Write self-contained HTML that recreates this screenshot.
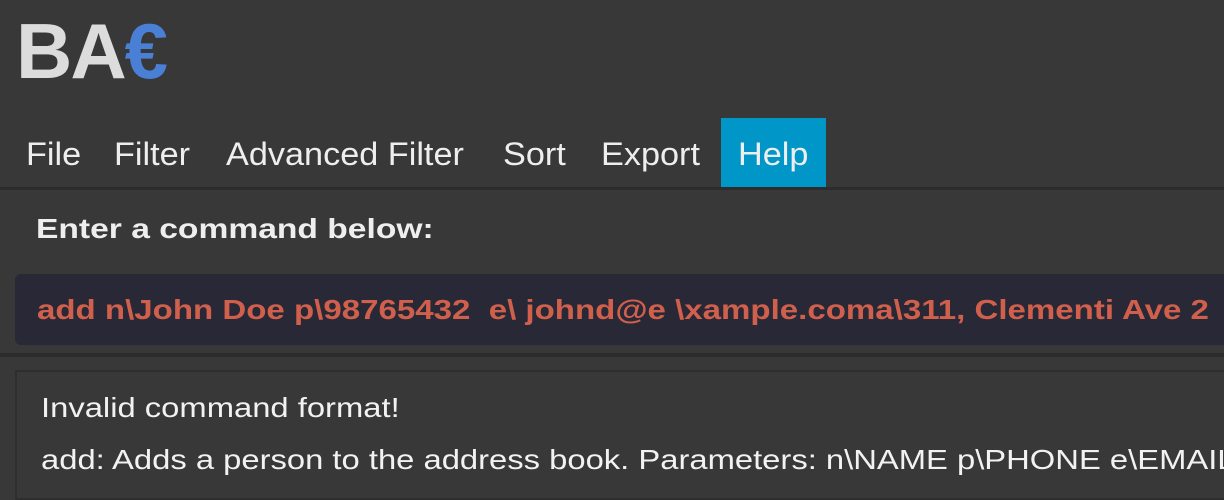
<!DOCTYPE html>
<html><head><meta charset="utf-8"><style>
html,body{margin:0;padding:0;width:1224px;height:482px;overflow:hidden;background:#383838;font-family:"Liberation Sans",sans-serif;}
.logo{position:absolute;left:16px;top:6px;font-size:78px;font-weight:bold;color:#dcdcdc;letter-spacing:-2px;line-height:90px;}
.logo span{color:#4a7fd6;}
.menu{position:absolute;top:118px;left:0;height:69px;}
.mi{position:absolute;top:0;height:69px;line-height:72px;font-size:32px;color:#eee;white-space:nowrap;}
.mi span{display:inline-block;transform:scaleX(1.07);transform-origin:left;}
.help{background:#0096c8;left:721px;width:105px;}
.div1{position:absolute;top:187px;left:0;width:1224px;height:3px;background:#2c2c2c;}
.enter{position:absolute;left:36px;top:213px;font-size:28px;font-weight:bold;color:#eee;transform:scaleX(1.2);transform-origin:left;white-space:nowrap;}
.cmd{position:absolute;left:15px;top:274px;width:1230px;height:71px;background:#282836;border-radius:6px;}
.cmd div{position:absolute;left:22px;top:20px;font-size:28px;font-weight:bold;color:#d0604c;white-space:nowrap;transform:scaleX(1.18);transform-origin:left;}
.div2{position:absolute;top:353px;left:0;width:1224px;height:4px;background:#2c2c2c;}
.res{position:absolute;left:15px;top:370px;width:1230px;height:130px;border:2px solid #2e2e2e;box-sizing:border-box;}
.res p{margin:0;position:absolute;left:24px;font-size:28px;color:#f2f2f2;white-space:nowrap;transform:scaleX(1.17);transform-origin:left;}
</style></head><body>
<div class="logo">BA<span>€</span></div>
<div class="menu">
<div class="mi" style="left:26px"><span>File</span></div>
<div class="mi" style="left:114px"><span>Filter</span></div>
<div class="mi" style="left:226px"><span>Advanced Filter</span></div>
<div class="mi" style="left:503px"><span>Sort</span></div>
<div class="mi" style="left:601px"><span>Export</span></div>
<div class="mi help"><span style="margin-left:17px">Help</span></div>
</div>
<div class="div1"></div>
<div class="enter">Enter a command below:</div>
<div class="cmd"><div>add n\John Doe p\98765432&nbsp; e\ johnd@e \xample.coma\311, Clementi Ave 2</div></div>
<div class="div2"></div>
<div class="res">
<p style="top:20px">Invalid command format!</p>
<p style="top:72px">add: Adds a person to the address book. Parameters: n\NAME p\PHONE e\EMAIL</p>
</div>
</body></html>
